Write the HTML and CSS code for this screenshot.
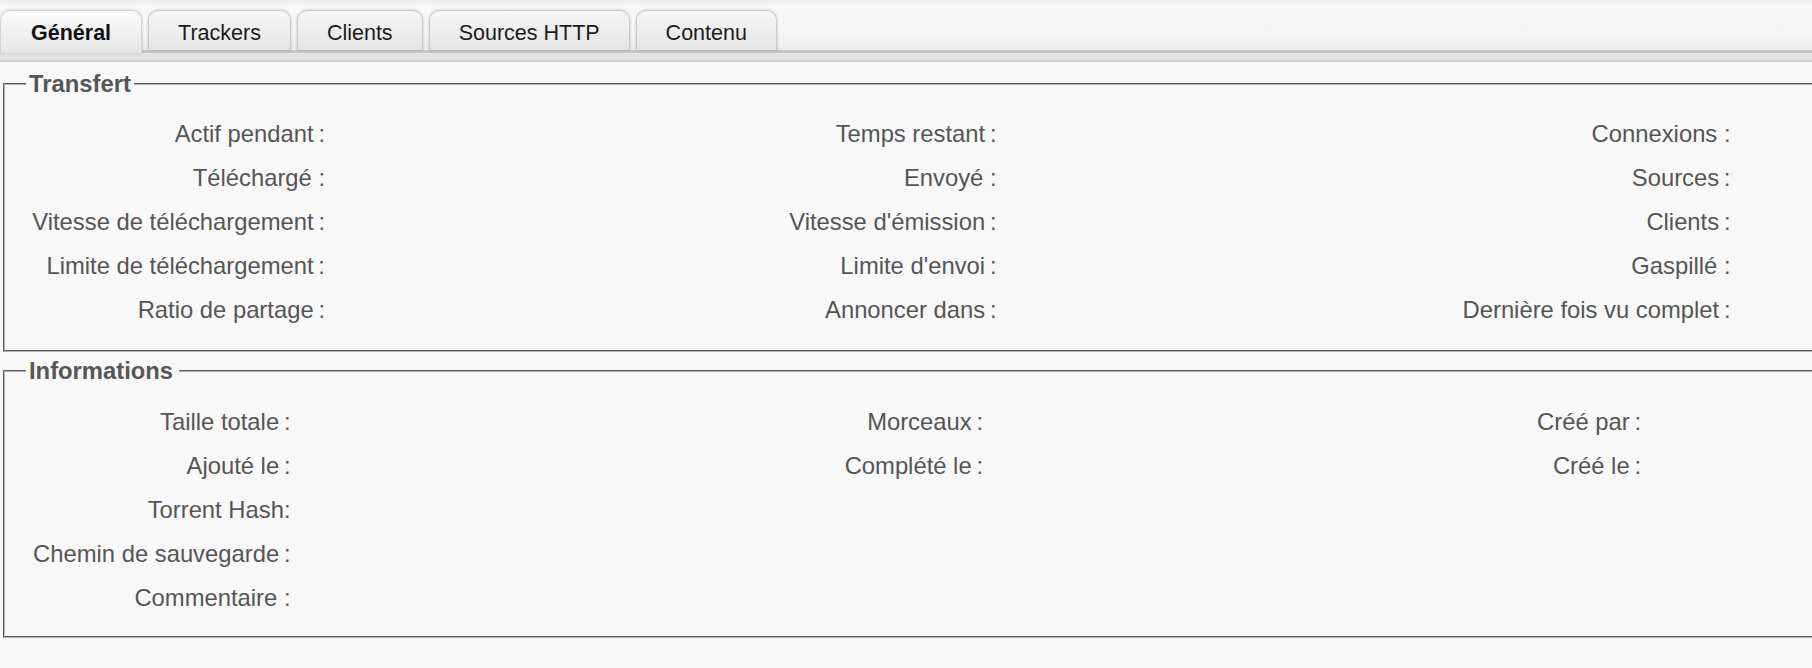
FILE: index.html
```html
<!DOCTYPE html>
<html lang="fr">
<head>
<meta charset="utf-8">
<title>Propriétés</title>
<link rel="stylesheet" href="styles.css">
</head>
<body>
<div class="tabbar">
  <ul class="tabs">
    <li class="tab active">Général</li>
    <li class="tab">Trackers</li>
    <li class="tab">Clients</li>
    <li class="tab">Sources HTTP</li>
    <li class="tab">Contenu</li>
  </ul>
</div>
<div class="tabbar-under"></div>
<main class="content">
  <fieldset class="group group-transfer">
    <legend class="group-title">Transfert</legend>
    <div class="grid grid-transfer">
      <div class="label">Actif pendant&#8239;:</div><div class="value"></div>
      <div class="label">Temps restant&#8239;:</div><div class="value"></div>
      <div class="label">Connexions :</div><div class="value"></div>

      <div class="label">Téléchargé :</div><div class="value"></div>
      <div class="label">Envoyé :</div><div class="value"></div>
      <div class="label">Sources&#8239;:</div><div class="value"></div>

      <div class="label">Vitesse de téléchargement&#8239;:</div><div class="value"></div>
      <div class="label">Vitesse d'émission&#8239;:</div><div class="value"></div>
      <div class="label">Clients&#8239;:</div><div class="value"></div>

      <div class="label">Limite de téléchargement&#8239;:</div><div class="value"></div>
      <div class="label">Limite d'envoi&#8239;:</div><div class="value"></div>
      <div class="label">Gaspillé :</div><div class="value"></div>

      <div class="label">Ratio de partage&#8239;:</div><div class="value"></div>
      <div class="label">Annoncer dans&#8239;:</div><div class="value"></div>
      <div class="label">Dernière fois vu complet&#8239;:</div><div class="value"></div>
    </div>
  </fieldset>
  <fieldset class="group group-info">
    <legend class="group-title group-title-wide">Informations</legend>
    <div class="grid grid-info">
      <div class="label">Taille totale&#8239;:</div><div class="value"></div>
      <div class="label">Morceaux&#8239;:</div><div class="value"></div>
      <div class="label">Créé par&#8239;:</div><div class="value"></div>

      <div class="label">Ajouté le&#8239;:</div><div class="value"></div>
      <div class="label">Complété le&#8239;:</div><div class="value"></div>
      <div class="label">Créé le&#8239;:</div><div class="value"></div>

      <div class="label">Torrent Hash:</div><div class="value"></div>
      <div class="label"></div><div class="value"></div>
      <div class="label"></div><div class="value"></div>

      <div class="label">Chemin de sauvegarde&#8239;:</div><div class="value"></div>
      <div class="label"></div><div class="value"></div>
      <div class="label"></div><div class="value"></div>

      <div class="label">Commentaire :</div><div class="value"></div>
      <div class="label"></div><div class="value"></div>
      <div class="label"></div><div class="value"></div>
    </div>
  </fieldset>
</main>
</body>
</html>
```

FILE: styles.css
```css
html, body {
  margin: 0;
  padding: 0;
  overflow: hidden;
}

body {
  background: #f8f8f8;
  font-family: "Liberation Sans", Arial, sans-serif;
  color: #555;
}

.tabbar {
  height: 53px;
  box-sizing: border-box;
  padding-top: 10px;
  background: linear-gradient(#eeeeee 0px, #f7f7f7 8px, #f6f6f6 30px, #ebebeb 50px);
  box-shadow: inset 0 -3px 0 #c6c6c6;
}

.tabs {
  list-style: none;
  margin: 0;
  padding: 0;
  display: flex;
  align-items: flex-start;
  gap: 6px;
}

.tab {
  box-sizing: border-box;
  height: 40px;
  padding: 5px 29px 0;
  line-height: 35px;
  font-size: 21.5px;
  color: #1c1c1c;
  white-space: nowrap;
  border: 1px solid #c9c9c9;
  border-bottom: none;
  border-radius: 10px 10px 0 0;
  background: linear-gradient(#f6f6f6, #e4e4e4);
  box-shadow: 0 0 3px rgba(0, 0, 0, 0.2);
}

.tab.active {
  height: 43px;
  padding-left: 30px;
  padding-right: 30px;
  font-weight: bold;
  color: #111;
  border-color: #d2d2d2;
  background: linear-gradient(#fbfbfb, #eaeaea 80%, #e4e4e4);
  position: relative;
  z-index: 1;
}

.tabbar-under {
  height: 7px;
  background: #e3e3e3;
  border-bottom: 2px solid #cfcfcf;
}

.content {
  display: flex;
  flex-direction: column;
}

.group {
  margin: 8px -60px 0 3px;
  padding: 13.5px 0 18.5px;
  border: 2px groove #b0b0b0;
  min-width: 0;
}

.group-info {
  margin-top: 5px;
  padding-top: 15px;
  padding-bottom: 15.5px;
}

.group-title {
  margin-left: 21px;
  padding: 0 3px;
  font-size: 23.8px;
  line-height: 28px;
  font-weight: bold;
  color: #565656;
}

.group-title-wide {
  padding-right: 6px;
}

.grid {
  display: grid;
  grid-auto-rows: 44px;
  align-items: center;
  font-size: 23.8px;
  line-height: 44px;
  color: #555;
}

.grid-transfer {
  grid-template-columns: 320px 250px 421.5px 250px 484px 1fr;
}

.grid-info {
  grid-template-columns: 285.5px 250px 442.5px 250px 408px 1fr;
}

.label {
  text-align: right;
  white-space: nowrap;
}
```
